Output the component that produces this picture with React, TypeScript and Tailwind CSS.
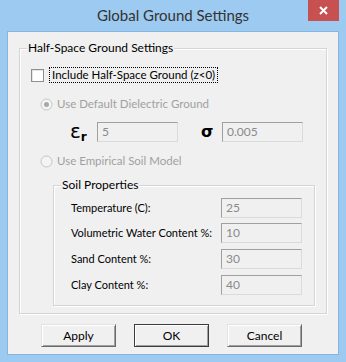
import React from 'react';

const font = { fontFamily: 'Lato, "Open Sans", sans-serif' };

const Radio: React.FC<{ checked?: boolean }> = ({ checked }) => (
  <svg width="13" height="13" viewBox="0 0 13 13" className="shrink-0">
    <circle cx="6.5" cy="6.5" r="5.5" fill="#f4f4f4" stroke="#c4c4c4" />
    {checked && <circle cx="6.5" cy="6.5" r="2.5" fill="#a8a8a8" />}
  </svg>
);

const Field: React.FC<{ value: string; className?: string }> = ({ value, className }) => (
  <div
    className={`h-[20px] w-[81px] shrink-0 border border-t-[#a0a0a0] border-l-[#a0a0a0] border-r-[#dadada] border-b-[#dadada] bg-[#f0f0f0] pl-[4px] text-[12px] leading-[18px] text-[#8a8a8a] ${className ?? ''}`}
  >
    {value}
  </div>
);

const GroupBox: React.FC<{ label: string; className?: string; children: React.ReactNode }> = ({ label, className, children }) => (
  <div className={`relative border border-[#d5d5d5] shadow-[inset_1px_1px_0_#fff,1px_1px_0_#fff] ${className ?? ''}`}>
    <span className="absolute left-[7px] top-[-9px] whitespace-nowrap bg-[#f0f0f0] px-[1px] text-[12px] leading-[16px] text-black">{label}</span>
    {children}
  </div>
);

const Btn: React.FC<{ label: string; isDefault?: boolean }> = ({ label, isDefault }) => (
  <button
    className={`h-[23px] w-[75px] bg-[#f0f0f0] text-[12px] text-black ${
      isDefault
        ? 'border border-[#3c3c3c] shadow-[inset_1px_1px_0_#fff,inset_-1px_-1px_0_#a0a0a0]'
        : 'border border-t-[#e3e3e3] border-l-[#e3e3e3] border-r-[#696969] border-b-[#696969] shadow-[inset_1px_1px_0_#fff,inset_-1px_-1px_0_#a0a0a0]'
    }`}
  >
    {label}
  </button>
);

const soilRows = [
  { label: 'Temperature (C):', value: '25', mt: 'mt-[12px]' },
  { label: 'Volumetric Water Content %:', value: '10', mt: 'mt-[5px]' },
  { label: 'Sand Content %:', value: '30', mt: 'mt-[6px]' },
  { label: 'Clay Content %:', value: '40', mt: 'mt-[6px]' },
];

export default function App() {
  return (
    <div className="flex h-[362px] w-[346px] flex-col bg-[#9dcaf0]" style={font}>
      {/* title bar */}
      <div className="relative flex h-[31px] items-center justify-center">
        <span className="text-[15px] text-[#333]">Global Ground Settings</span>
        <div className="absolute right-[7px] top-0 flex h-[21px] w-[31px] items-center justify-center bg-[#c75050]">
          <svg width="9" height="9" viewBox="0 0 9 9">
            <path d="M1 1 L8 8 M8 1 L1 8" stroke="#fff" strokeWidth="2" />
          </svg>
        </div>
      </div>

      {/* client area */}
      <div className="mx-[7px] flex h-[324px] flex-col border border-[#86b6df] bg-[#f0f0f0] text-[11px] text-black">
        <GroupBox label="Half-Space Ground Settings" className="ml-[11px] mt-[16px] h-[266px] w-[308px]">
          <div className="flex flex-col pt-[18px]">
            <div className="flex h-[16px] items-center pl-[11px]">
              <div className="h-[13px] w-[13px] border border-[#8f8f8f] bg-white shadow-[inset_1px_1px_0_#e5e5e5]" />
              <span className="ml-[5px] whitespace-nowrap border border-dotted border-black px-[2px] text-[11.5px] leading-[14px]">Include Half-Space Ground (z&lt;0)</span>
            </div>

            <div className="mt-[13px] flex h-[16px] items-center pl-[20px] text-[11.5px] text-[#a0a0a0]">
              <Radio checked />
              <span className="ml-[4px]">Use Default Dielectric Ground</span>
            </div>

            <div className="mt-[10px] flex h-[20px] items-center">
              <span className="ml-[50px] w-[27px] text-[20px] leading-[20px]" style={{ fontFamily: '"DejaVu Sans", sans-serif' }}>
                ε<span className="relative top-[3px] text-[12px] font-bold">r</span>
              </span>
              <Field value="5" />
              <span className="ml-[23px] w-[21px] text-[16px] font-bold leading-[20px]" style={{ fontFamily: '"DejaVu Sans", sans-serif' }}>
                σ
              </span>
              <Field value="0.005" />
            </div>

            <div className="mt-[11px] flex h-[16px] items-center pl-[20px] text-[11.5px] text-[#a0a0a0]">
              <Radio />
              <span className="ml-[4px]">Use Empirical Soil Model</span>
            </div>

            <GroupBox label="Soil Properties" className="ml-[33px] mt-[16px] h-[121px] w-[262px]">
              <div className="flex flex-col">
                {soilRows.map((r) => (
                  <div key={r.label} className={`flex h-[20px] items-center ${r.mt}`}>
                    <span className="ml-[17px] w-[150px] whitespace-nowrap">{r.label}</span>
                    <Field value={r.value} />
                  </div>
                ))}
              </div>
            </GroupBox>
          </div>
        </GroupBox>

        <div className="mt-[10px] flex gap-[18px] pl-[33px]">
          <Btn label="Apply" />
          <Btn label="OK" isDefault />
          <Btn label="Cancel" />
        </div>
      </div>
    </div>
  );
}
